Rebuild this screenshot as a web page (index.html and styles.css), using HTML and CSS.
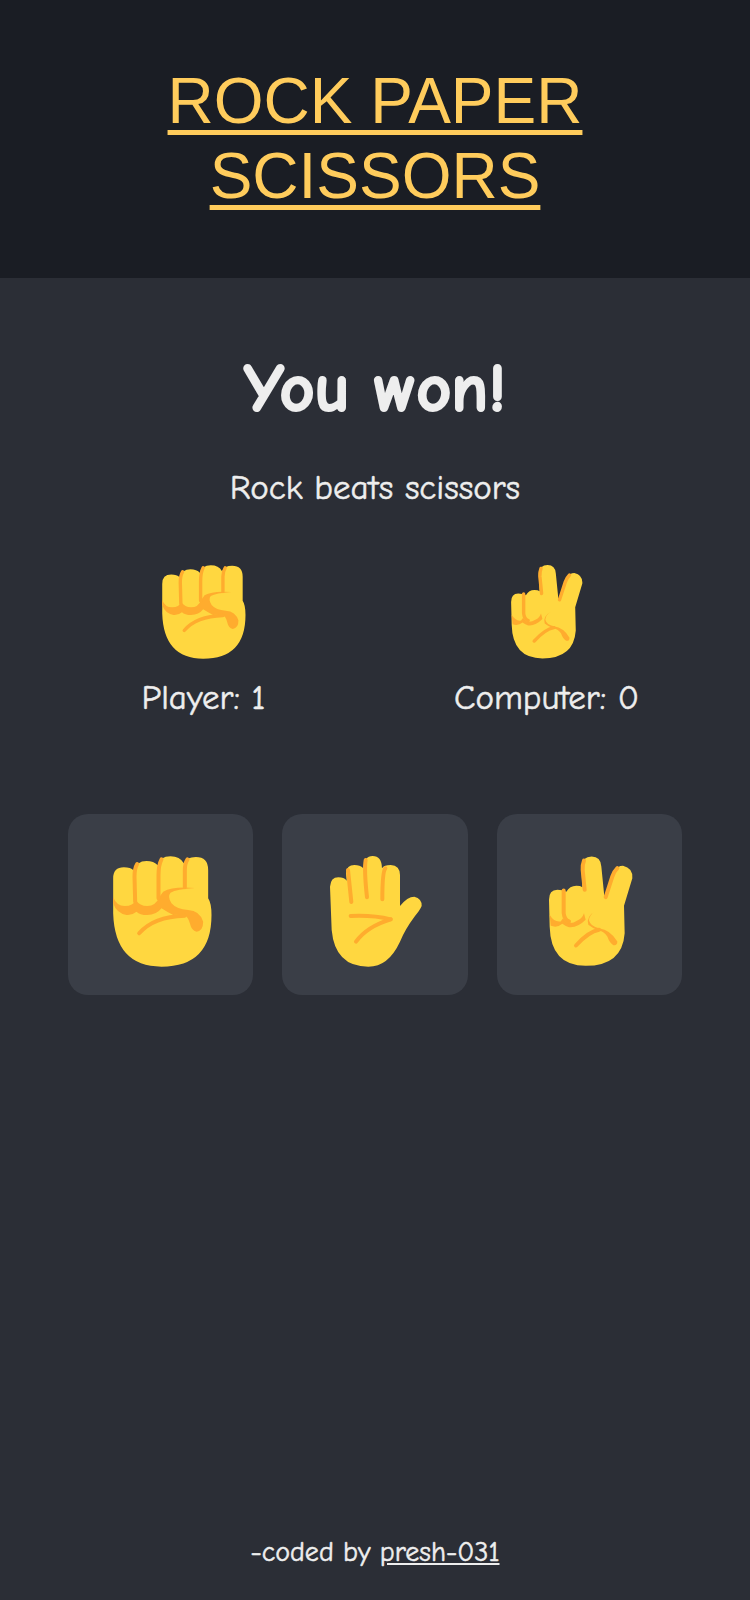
FILE: index.html
```html
<!DOCTYPE html>
<html lang="en">
<head>
    <meta charset="UTF-8">
    <meta name="viewport" content="width=device-width, initial-scale=1.0">
    <title>Rock Paper Scissors</title>
    <link rel="stylesheet" href="styles.css">
</head>
<body>

    <svg class="defs" width="0" height="0">
        <!-- hands drawn in the 3x zoom pixels of the reference -->
        <symbol id="rock" viewBox="160 168 296 333">
            <path class="skin" d="M160 235Q160 202 192 202Q212 202 222 212Q230 183 260 183Q282 183 294 196Q300 169 332 169Q360 169 372 190Q380 171 408 171Q445 171 445 210L445 295Q455 310 455 345Q455 500 305 500Q165 500 160 340Z"/>
            <path class="crease" d="M160 292Q170 318 195 318Q220 318 228 300Q240 318 262 318Q288 318 298 292L310 275Q340 258 405 264Q350 268 332 278Q322 290 335 310Q350 328 385 330Q420 332 430 365Q430 392 410 395Q395 392 390 370Q385 350 375 347Q350 342 340 345Q325 338 305 325Q290 345 262 345Q240 345 230 335Q215 347 200 345Q170 340 160 310Z"/>
            <path class="line" d="M238 400Q280 350 375 347"/>
            <path class="line" d="M232 192Q224 205 224 230L226 305"/>
            <path class="line" d="M305 178Q296 195 296 225L296 295"/>
            <path class="line" d="M383 178Q375 190 375 210L375 262"/>
        </symbol>
        <symbol id="paper" viewBox="30 18 276 333">
            <path class="skin" d="M30 110Q32 82 55 82Q72 82 80 92L78 70Q80 45 103 45Q120 45 130 55Q132 18 158 18Q185 18 186 55Q192 45 212 45Q240 47 240 75L240 168Q262 140 283 140Q306 145 305 168Q300 180 285 198Q255 238 240 275Q205 350 145 350Q45 350 35 240Z"/>
            <path class="line" d="M84 60L94 156"/>
            <path class="line" d="M137 30Q132 60 141 142"/>
            <path class="line" d="M196 55Q187 65 187 148"/>
            <path class="line" d="M92 198Q160 195 212 208"/>
            <path class="line" d="M108 275Q140 230 212 208"/>
        </symbol>
        <symbol id="scissors" viewBox="540 170 252 330">
            <path class="skin" d="M540 300Q540 270 565 270Q582 270 592 276Q602 258 622 258Q635 258 640 262L637 200Q640 170 668 170Q695 170 697 200L706 290L735 215Q745 198 762 198Q792 205 790 235L765 318L767 400Q760 498 650 498Q545 498 542 380Z"/>
            <path class="crease" d="M542 345Q555 368 575 365L582 355Q598 380 625 362Q640 355 645 340L650 360Q625 385 600 382Q590 380 580 372Q565 385 545 378Z"/>
            <path class="line" d="M584 272L584 340Q586 360 600 365"/>
            <path class="line" d="M645 182Q640 195 641 210L647 270"/>
            <path class="line" d="M745 205Q735 215 730 230L710 292"/>
            <path class="crease" d="M682 332Q660 345 660 362Q665 380 690 385Q725 390 745 425Q745 438 733 436Q722 430 715 410Q705 395 690 393Q670 385 658 375Q650 350 682 332Z"/>
            <path class="line" d="M621 437Q660 395 690 390"/>
        </symbol>
    </svg>

    <header class="topo">
        <h1><span>ROCK PAPER SCISSORS</span></h1>
    </header>

    <main class="jogo">
        <h2>You won!</h2>
        <p class="mensagem">Rock beats scissors</p>

        <div class="placar">
            <div class="jogador">
                <svg class="mao-rock"><use href="#rock"/></svg>
                <p>Player: 1</p>
            </div>
            <div class="jogador">
                <svg class="mao-scissors"><use href="#scissors"/></svg>
                <p>Computer: 0</p>
            </div>
        </div>

        <div class="controles">
            <button><svg class="btn-rock"><use href="#rock"/></svg></button>
            <button><svg class="btn-paper"><use href="#paper"/></svg></button>
            <button><svg class="btn-scissors"><use href="#scissors"/></svg></button>
        </div>
    </main>

    <footer class="rodape">
        <p>-coded by <a href="#">presh-031</a></p>
    </footer>

</body>
</html>
```

FILE: styles.css
```css
* {
    box-sizing: border-box;
}

body {
    font-family: "Comic Sans MS", "Comic Neue", cursive;
    background-color: #2b2e36;
    color: #eeeeee;
    margin: 0;
    height: 1600px;
    display: flex;
    flex-direction: column;
    -webkit-text-stroke: 0.5px #eeeeee;
}

.defs {
    position: absolute;
}

.skin {
    fill: #ffd740;
}

.crease {
    fill: #ffac2e;
}

.line {
    fill: none;
    stroke: #ffac2e;
    stroke-width: 12;
    stroke-linecap: round;
}

.topo {
    background-color: #1a1d24;
    height: 278px;
    padding-top: 64px;
    text-align: center;
}

h1 {
    font-family: "Liberation Sans", Arial, sans-serif;
    font-weight: 400;
    font-size: 64px;
    color: #ffcc5c;
    margin: 0 auto;
    width: 440px;
    line-height: 75px;
    text-decoration: underline;
    text-decoration-thickness: 5px;
    text-underline-offset: 7px;
    -webkit-text-stroke: 0;
}

.jogo {
    flex: 1;
    padding-top: 74px;
    text-align: center;
}

h2 {
    font-size: 68px;
    line-height: 74px;
    margin: 0;
    -webkit-text-stroke: 2px #eeeeee;
}

.mensagem {
    font-size: 35px;
    line-height: 44px;
    margin: 40px 0 0;
}

.placar {
    display: grid;
    grid-template-columns: 343px 343px;
    justify-content: center;
    margin-top: 55px;
}

.jogador {
    display: flex;
    flex-direction: column;
    align-items: center;
}

.jogador p {
    font-size: 35px;
    line-height: 44px;
    margin: 17px 0 0;
}

.mao-rock {
    width: 84px;
    height: 94px;
}

.mao-scissors {
    width: 72px;
    height: 94px;
}

.controles {
    display: flex;
    gap: 29px;
    width: 614px;
    margin: 94px 0 0 68px;
}

button {
    flex: 1;
    background-color: #3a3e47;
    border: none;
    border-radius: 20px;
    height: 181px;
    padding: 14px 0 0 3px;
    display: flex;
    justify-content: center;
    align-items: center;
}

button svg {
    height: 111px;
}

.btn-rock {
    width: 99px;
}

.btn-paper {
    width: 92px;
}

.btn-scissors {
    width: 84px;
}

.rodape {
    text-align: center;
    font-size: 28px;
    line-height: 38px;
    padding-bottom: 29px;
}

.rodape p {
    margin: 0;
}

.rodape a {
    color: #eeeeee;
}
```
